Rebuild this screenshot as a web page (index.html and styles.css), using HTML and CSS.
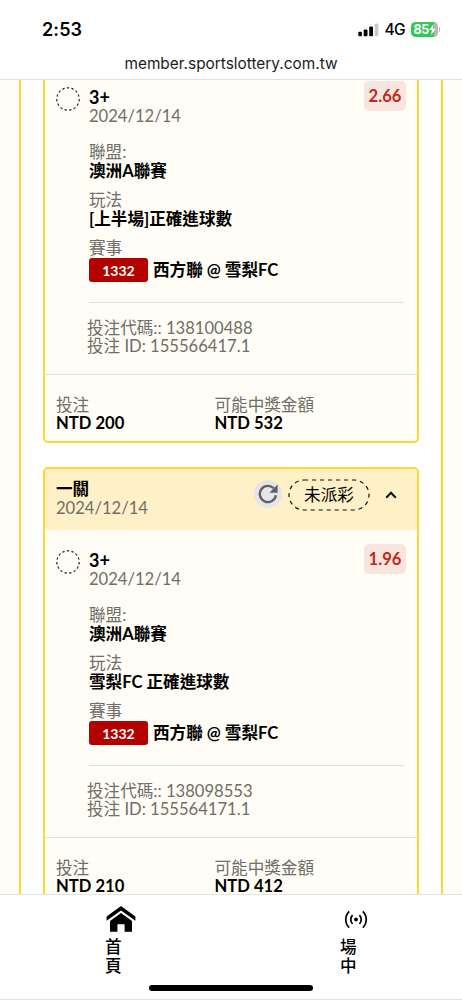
FILE: index.html
```html
<!DOCTYPE html>
<html lang="zh-Hant">
<head>
<meta charset="utf-8">
<meta name="viewport" content="width=device-width, initial-scale=1">
<title>member.sportslottery.com.tw</title>
<link rel="stylesheet" href="styles.css">
</head>
<body>
<div class="screen">
  <header class="top">
    <div class="status">
      <span class="clock">2:53</span>
      <span class="status-icons">
        <svg class="signal" width="21" height="14" viewBox="0 0 21 14"><rect x="0.3" y="8.7" width="3.6" height="4.6" rx="1"/><rect x="5.7" y="6.5" width="3.8" height="6.8" rx="1"/><rect x="11.2" y="3.5" width="3.8" height="9.8" rx="1"/><rect x="16.7" y="0.4" width="3.6" height="12.9" rx="1" fill="#c9c9c9"/></svg>
        <span class="network">4G</span>
        <span class="battery"><span class="level">85</span><svg class="bolt" width="7" height="11" viewBox="0 0 7 11"><path d="M4.6 0 0.2 6h2.7L2.1 11 6.8 4.7H4Z" fill="#fff"/></svg></span>
        <span class="cap"></span>
      </span>
    </div>
    <div class="address">member.sportslottery.com.tw</div>
  </header>

  <main class="viewport">
    <div class="panel">
      <section class="card card-first">
        <div class="detail">
          <div class="pick">
            <svg class="ring" width="24" height="24" viewBox="0 0 24 24"><circle cx="12" cy="12" r="11.2" pathLength="60"/></svg>
            <div class="pick-text"><div class="strong">3+</div><div class="muted">2024/12/14</div></div>
            <span class="odds">2.66</span>
          </div>
          <div class="facts">
            <div class="fact"><div class="muted">聯盟:</div><div class="strong">澳洲A聯賽</div></div>
            <div class="fact"><div class="muted">玩法</div><div class="strong">[上半場]正確進球數</div></div>
            <div class="muted">賽事</div>
            <div class="match"><span class="code">1332</span><span class="strong">西方聯 @ 雪梨FC</span></div>
          </div>
          <div class="ids muted"><div>投注代碼:: 138100488</div><div>投注 ID: 155566417.1</div></div>
        </div>
        <div class="totals">
          <div class="total"><div class="muted">投注</div><div class="strong">NTD 200</div></div>
          <div class="total"><div class="muted">可能中獎金額</div><div class="strong">NTD 532</div></div>
        </div>
      </section>

      <section class="card">
        <div class="card-head">
          <div class="head-text"><div class="strong">一關</div><div class="muted">2024/12/14</div></div>
          <span class="refresh"><svg width="20" height="20" viewBox="0 0 20 20"><path d="M17.9 11.2A8.1 8.1 0 1 1 15.6 4.2" fill="none" stroke="#616161" stroke-width="2.4"/><path d="M19.6 0.6V8.8H11.4Z" fill="#616161"/></svg></span>
          <span class="state"><svg class="state-line" width="82" height="32" viewBox="0 0 82 32"><rect x="1" y="1" width="80" height="30" rx="15"/></svg><span class="state-label">未派彩</span></span>
          <svg class="chevron" width="12" height="8" viewBox="0 0 12 8"><path d="M1.2 6.7 6 1.8l4.8 4.9" fill="none" stroke="#111" stroke-width="2.1"/></svg>
        </div>
        <div class="detail">
          <div class="pick">
            <svg class="ring" width="24" height="24" viewBox="0 0 24 24"><circle cx="12" cy="12" r="11.2" pathLength="60"/></svg>
            <div class="pick-text"><div class="strong">3+</div><div class="muted">2024/12/14</div></div>
            <span class="odds">1.96</span>
          </div>
          <div class="facts">
            <div class="fact"><div class="muted">聯盟:</div><div class="strong">澳洲A聯賽</div></div>
            <div class="fact"><div class="muted">玩法</div><div class="strong">雪梨FC 正確進球數</div></div>
            <div class="muted">賽事</div>
            <div class="match"><span class="code">1332</span><span class="strong">西方聯 @ 雪梨FC</span></div>
          </div>
          <div class="ids muted"><div>投注代碼:: 138098553</div><div>投注 ID: 155564171.1</div></div>
        </div>
        <div class="totals">
          <div class="total"><div class="muted">投注</div><div class="strong">NTD 210</div></div>
          <div class="total"><div class="muted">可能中獎金額</div><div class="strong">NTD 412</div></div>
        </div>
      </section>
    </div>
  </main>

  <footer class="bottom">
    <nav class="tabs">
      <a class="tab tab-home"><svg width="30" height="28" viewBox="0 0 30 28"><path d="M15 1 29.4 11.6V15.8L15 5.4 0.6 15.8V11.6Z"/><path d="M15 8 26 15.9V26.8H18.6V19.3H11.4V26.8H4V15.9Z"/></svg><span>首頁</span></a>
      <a class="tab tab-live"><svg width="24" height="28" viewBox="0 0 24 28"><circle cx="12" cy="14.5" r="1.9"/><path d="M8.6 10.1a6.2 6.2 0 0 0 0 8.8M15.4 10.1a6.2 6.2 0 0 1 0 8.8M5.2 6.3a11.5 11.5 0 0 0 0 16.4M18.8 6.3a11.5 11.5 0 0 1 0 16.4" fill="none" stroke="#000" stroke-width="1.7"/></svg><span>場中</span></a>
    </nav>
    <div class="home-bar"></div>
  </footer>
</div>
</body>
</html>
```
FILE: styles.css
```css
* { box-sizing: border-box; }

body {
  margin: 0;
  background: #fff;
  color: #000;
  font-family: Lato, "Noto Sans CJK TC", sans-serif;
  font-size: 16.6px;
  line-height: 19px;
}

svg { display: block; flex: none; }

.screen { display: flex; flex-direction: column; width: 462px; height: 1000px; overflow: hidden; }

.top { height: 80px; flex: none; border-bottom: 1px solid #dfdfdf; font-family: Inter, sans-serif; }
.status { display: flex; justify-content: space-between; padding: 19px 22px 0 42px; height: 54px; }
.clock { font-size: 18px; font-weight: 600; line-height: 22px; letter-spacing: 0.1px; }
.status-icons { display: flex; align-items: center; height: 21px; }
.network { margin-left: 6px; width: 26px; font-size: 15.5px; font-weight: 500; letter-spacing: -0.6px; white-space: nowrap; }
.battery {
  display: flex; align-items: center; width: 27px; height: 15px; padding-left: 3px;
  border-radius: 4.5px; background: linear-gradient(90deg, #34c759 85%, #b5b5b5 85%);
}
.level { color: #fff; font-size: 12.5px; font-weight: 700; letter-spacing: -0.4px; }
.cap { width: 1.5px; height: 5px; margin-left: 1px; border-radius: 0 2px 2px 0; background: #b5b5b5; }
.address { text-align: center; font-size: 15.4px; line-height: 20px; color: #1c1c1c; }

.viewport { flex: 1; min-height: 0; overflow: hidden; padding: 0 19px; background: #fffdf5; }
.panel { padding: 0 22px; background: #fff; border: solid #ffd72e; border-width: 0 2px; min-height: 100%; }

.card { border: 2.5px solid #ffd72e; border-width: 2px; border-radius: 5px; background: #fffdf5; overflow: hidden; }
.card + .card { margin-top: 24px; }
.card-first { border-top: 0; border-radius: 0 0 5px 5px; margin-top: -13px; }

.strong { font-weight: 700; white-space: nowrap; }
.muted { color: #6e6e6a; white-space: nowrap; }

.card-head { display: flex; height: 61px; padding: 10px 20px 0 11px; background: #fff1c7; }
.head-text { flex: 1; padding-top: 1px; }
.refresh { display: flex; align-items: center; justify-content: center; width: 28px; height: 28px; margin-right: 6px; border-radius: 50%; background: #e5e5e8; margin-top: 1px; }
.state { position: relative; width: 82px; height: 32px; margin-right: 15px; }
.state-line { fill: none; stroke: #111; stroke-width: 1.2; stroke-dasharray: 4.2 3.8; }
.state-label { position: absolute; inset: 0; text-align: center; line-height: 33px; }
.chevron { margin-top: 12px; }

.detail { height: 308px; padding-top: 20px; border-bottom: 1px solid #e2dfd8; }
.pick { display: flex; height: 55px; padding: 0 11px; }
.ring { margin-right: 9px; }
.ring circle { fill: none; stroke: #222; stroke-width: 1.2; stroke-dasharray: 2 2; }
.pick-text { flex: 1; }
.pick .strong { font-size: 18px; line-height: 20px; }
.odds { width: 42px; height: 30px; margin-top: -6px; border-radius: 5px; background: #f8e6de; color: #c0281c; font-weight: 700; text-align: center; line-height: 31px; }
.facts { margin: 0 13px 0 44px; height: 161px; border-bottom: 1px solid #e2dfd8; }
.fact { height: 48.5px; padding-top: 0.5px; }
.match { display: flex; align-items: center; gap: 5px; }
.code { width: 59px; height: 24px; border-radius: 3px; background: #b50000; color: #fff; font-size: 14px; font-weight: 700; line-height: 25px; text-align: center; }
.ids { padding: 16px 0 0 42px; line-height: 18px; }

.totals { display: flex; height: 66px; padding: 21px 0 0 11px; line-height: 18px; }
.total { width: 158.5px; }

.bottom { flex: none; height: 106px; border-top: 1px solid #e4e4e4; border-bottom: 1px solid #e0e0e0; background: #fff; }
.tabs { display: flex; justify-content: space-between; padding: 10px 90px 0 105px; height: 92px; }
.tab { display: flex; flex-direction: column; align-items: center; gap: 5px; width: 32px; font-weight: 500; }
.home-bar { width: 164px; height: 6px; margin: 0 auto; border-radius: 3px; background: #000; position: relative; top: -2px; }
```
